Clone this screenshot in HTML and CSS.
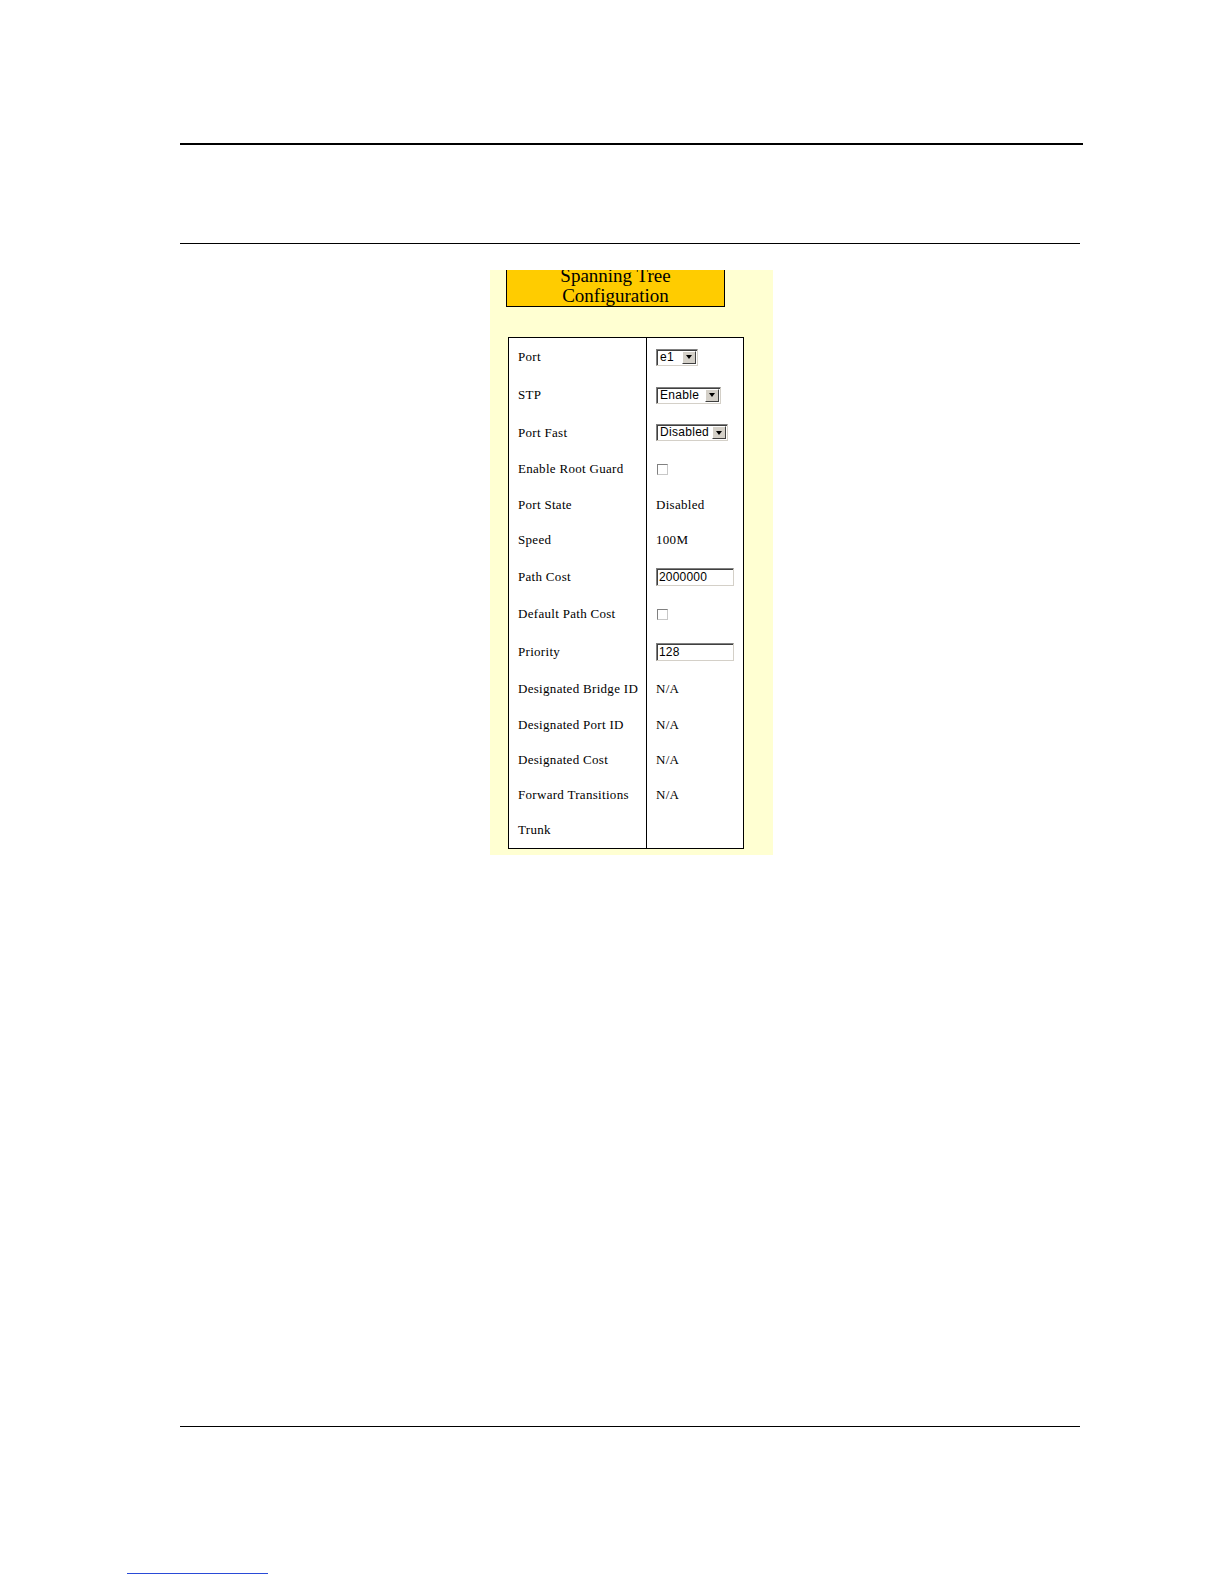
FILE: index.html
```html
<!DOCTYPE html>
<html>
<head>
<meta charset="utf-8">
<title>Spanning Tree Configuration</title>
<link rel="stylesheet" href="styles.css">
</head>
<body>
<div class="page">
  <div class="rule-top"></div>
  <div class="rule-mid"></div>
  <div class="panel">
    <div class="title-box">
      <div class="title-text">Spanning Tree<br>Configuration</div>
    </div>
    <div class="stp-table">
      <div class="col labels">
        <div class="row r38">Port</div>
        <div class="row r38">STP</div>
        <div class="row r37">Port Fast</div>
        <div class="row r36">Enable Root Guard</div>
        <div class="row">Port State</div>
        <div class="row r36">Speed</div>
        <div class="row r37">Path Cost</div>
        <div class="row r38">Default Path Cost</div>
        <div class="row r37">Priority</div>
        <div class="row r37">Designated Bridge ID</div>
        <div class="row">Designated Port ID</div>
        <div class="row">Designated Cost</div>
        <div class="row">Forward Transitions</div>
        <div class="row r36">Trunk</div>
      </div>
      <div class="col values">
        <div class="row r38"><span class="sel w42"><span class="sel-text">e1</span><span class="sel-btn"><span class="arrow"></span></span></span></div>
        <div class="row r38"><span class="sel w65"><span class="sel-text">Enable</span><span class="sel-btn"><span class="arrow"></span></span></span></div>
        <div class="row r37"><span class="sel w72"><span class="sel-text">Disabled</span><span class="sel-btn"><span class="arrow"></span></span></span></div>
        <div class="row r36"><span class="chk"></span></div>
        <div class="row">Disabled</div>
        <div class="row r36">100M</div>
        <div class="row r37"><span class="txt">2000000</span></div>
        <div class="row r38"><span class="chk"></span></div>
        <div class="row r37"><span class="txt">128</span></div>
        <div class="row r37">N/A</div>
        <div class="row">N/A</div>
        <div class="row">N/A</div>
        <div class="row">N/A</div>
        <div class="row r36"></div>
      </div>
    </div>
  </div>
  <div class="rule-bottom"></div>
</div>
<div class="footer-link"></div>
</body>
</html>
```

FILE: styles.css
```css
html, body {
  margin: 0;
  padding: 0;
  background: #ffffff;
}

.page {
  margin-left: 180px;
  padding-top: 143px;
  width: 903px;
}

.rule-top {
  height: 2px;
  background: #000000;
  width: 903px;
}

.rule-mid {
  margin-top: 98px;
  height: 1px;
  background: #000000;
  width: 900px;
}

.panel {
  margin-top: 26px;
  margin-left: 310px;
  width: 283px;
  height: 585px;
  background: #ffffd2;
  box-sizing: border-box;
  padding-left: 16px;
  display: flex;
  flex-direction: column;
}

.title-box {
  width: 219px;
  height: 37px;
  box-sizing: border-box;
  background: #ffcc00;
  border: 1px solid #000000;
  border-top: none;
  overflow: hidden;
}

.title-text {
  margin-top: -4px;
  font-family: "Liberation Serif", "Times New Roman", serif;
  font-size: 19px;
  line-height: 20px;
  text-align: center;
  color: #000000;
}

.stp-table {
  margin-top: 30px;
  margin-left: 2px;
  width: 236px;
  height: 512px;
  box-sizing: border-box;
  border: 1px solid #000000;
  background: #ffffff;
  display: flex;
  font-family: "Liberation Serif", "Times New Roman", serif;
  font-size: 13px;
  letter-spacing: 0.3px;
  color: #000000;
}

.col {
  display: flex;
  flex-direction: column;
}

.labels {
  width: 138px;
  border-right: 1px solid #000000;
  padding-left: 9px;
  box-sizing: border-box;
  white-space: nowrap;
}

.values {
  flex: 1;
  padding-left: 9px;
  white-space: nowrap;
}

.row {
  height: 35px;
  display: flex;
  align-items: center;
}

.row.r36 { height: 36px; }
.row.r37 { height: 37px; }
.row.r38 { height: 38px; }

.sel {
  display: inline-flex;
  height: 17px;
  box-sizing: border-box;
  border-top: 1px solid #808080;
  border-left: 1px solid #808080;
  border-bottom: 1px solid #d4d0c8;
  border-right: 1px solid #d4d0c8;
  box-shadow: inset 1px 1px 0 #404040;
  background: #ffffff;
  font-family: "Liberation Sans", Arial, sans-serif;
  font-size: 12px;
  letter-spacing: 0.3px;
  line-height: 15px;
}

.w42 { width: 42px; }
.w65 { width: 65px; }
.w72 { width: 72px; }

.sel-text {
  flex: 1;
  padding-left: 3px;
  overflow: hidden;
}

.sel-btn {
  width: 14px;
  height: 13px;
  margin: 1px 1px 0 0;
  box-sizing: border-box;
  background: #d4d0c8;
  border-top: 1px solid #ffffff;
  border-left: 1px solid #ffffff;
  border-bottom: 1px solid #404040;
  border-right: 1px solid #404040;
  display: flex;
  align-items: center;
  justify-content: center;
}

.arrow {
  width: 0;
  height: 0;
  border-left: 3.5px solid transparent;
  border-right: 3.5px solid transparent;
  border-top: 4px solid #000000;
}

.chk {
  display: inline-block;
  margin-left: 1px;
  width: 11px;
  height: 11px;
  box-sizing: border-box;
  border-top: 1px solid #808080;
  border-left: 1px solid #808080;
  border-bottom: 1px solid #c8c8c8;
  border-right: 1px solid #c8c8c8;
  background: #ffffff;
}

.txt {
  display: inline-block;
  width: 78px;
  height: 18px;
  box-sizing: border-box;
  border-top: 1px solid #808080;
  border-left: 1px solid #808080;
  border-bottom: 1px solid #d4d0c8;
  border-right: 1px solid #d4d0c8;
  box-shadow: inset 1px 1px 0 #404040;
  padding-left: 2px;
  font-family: "Liberation Sans", Arial, sans-serif;
  font-size: 12px;
  letter-spacing: 0.2px;
  line-height: 16px;
  background: #ffffff;
}

.rule-bottom {
  margin-top: 571px;
  height: 1px;
  background: #000000;
  width: 900px;
}

.footer-link {
  margin-top: 146px;
  margin-left: 127px;
  width: 141px;
  height: 1px;
  background: #2a4bd7;
}
```
